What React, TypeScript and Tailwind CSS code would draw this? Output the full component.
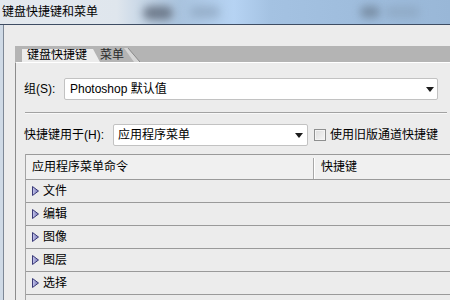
import React from "react";

function Tri() {
  return (
    <svg width="7" height="10" viewBox="0 0 7 10" className="shrink-0">
      <defs>
        <linearGradient id="tg" x1="0" y1="0" x2="1" y2="0">
          <stop offset="0" stopColor="#c8c8ee" />
          <stop offset="1" stopColor="#7070b0" />
        </linearGradient>
      </defs>
      <polygon points="0.5,0.5 6.5,5 0.5,9.5" fill="url(#tg)" stroke="#3a3a78" strokeWidth="1" />
    </svg>
  );
}

function Arrow() {
  return (
    <svg width="8" height="5" viewBox="0 0 8 5" className="shrink-0">
      <polygon points="0,0 8,0 4,5" fill="#1c1c1c" />
    </svg>
  );
}

export default function App() {
  const rows = ["文件", "编辑", "图像", "图层", "选择", ""];
  return (
    <div className="w-[450px] h-[300px] overflow-hidden bg-[#ececec] flex flex-col text-[12px] text-black font-['Liberation_Sans','Noto_Sans_CJK_SC',sans-serif]">
      <div className="relative h-[25px] shrink-0 border-b border-[#3e4d63] overflow-hidden bg-[linear-gradient(90deg,#e4e9ee_0%,#dfe6ed_26%,#c5d5e6_32%,#a9c3de_40%,#b6d3f3_52%,#a4c2e2_60%,#99b7d7_100%)]">
        <div className="absolute left-[143px] top-[6px] w-[30px] h-[14px] rounded-full bg-[#5d6878] blur-[4px] opacity-80" />
        <div className="absolute left-[190px] top-[6px] w-[30px] h-[12px] rounded-full bg-[#8ea6c0] blur-[4px] opacity-70" />
        <div className="absolute left-[360px] top-[6px] w-[20px] h-[12px] rounded-full bg-[#6b7d90] blur-[4px] opacity-70" />
        <div className="absolute left-[385px] top-[6px] w-[35px] h-[12px] rounded-full bg-[#8aa3bd] blur-[4px] opacity-60" />
        <span className="relative pl-[2px] leading-[24px] block">键盘快捷键和菜单</span>
      </div>
      <div className="flex flex-1 min-h-0">
        <div className="w-[4px] shrink-0 border-r border-[#7d8896] bg-[#cfdae6]" />
        <div className="flex-1 flex flex-col pt-[21px] min-w-0">
          <div className="ml-[11px] h-[16px] shrink-0 bg-[#b4b4b4] flex items-end pl-[7px]">
            <div className="relative z-10 h-[13px] w-[78px] bg-[#ececec] [clip-path:polygon(0_0,calc(100%-7px)_0,100%_100%,0_100%)] flex items-center pl-[5px] leading-[13px]">
              键盘快捷键
            </div>
            <div className="relative -ml-[4px] h-[14px] w-[44px] flex items-center pl-[4px] leading-[13px] text-[#2a2a2a]">
              菜单
              <svg width="18" height="14" viewBox="0 0 18 14" className="absolute right-0 top-0">
                <polygon points="2,0 6,0 18,14 12,14" fill="#d6d6d6" />
                <line x1="6" y1="0" x2="18" y2="14" stroke="#8a8a8a" strokeWidth="1" />
              </svg>
            </div>
          </div>
          <div className="ml-[11px] flex-1 border-l border-[#8c8c8c] border-t border-t-white pl-[8px] flex flex-col">
            <div className="mt-[15px] flex items-center h-[22px]">
              <div className="w-[40px] shrink-0">组(S):</div>
              <div className="w-[374px] h-[22px] shrink-0 bg-white border border-[#c2c2c2] rounded-[2px] flex items-center pl-[5px] pr-[3px]">
                <span className="flex-1">Photoshop 默认值</span>
                <Arrow />
              </div>
            </div>
            <div className="mt-[12px] ml-[1px] mr-[3px] h-[2px] border-t border-[#a2a2a2] border-b border-b-[#f8f8f8]" />
            <div className="mt-[10px] flex items-center h-[22px]">
              <div className="w-[89px] shrink-0">快捷键用于(H):</div>
              <div className="w-[195px] h-[22px] shrink-0 bg-white border border-[#c2c2c2] rounded-[2px] flex items-center pl-[4px] pr-[4px]">
                <span className="flex-1">应用程序菜单</span>
                <Arrow />
              </div>
              <div className="ml-[6px] w-[12px] h-[12px] shrink-0 border border-[#8e8f8f] bg-[linear-gradient(135deg,#dcdcdc,#f6f6f6)] shadow-[inset_0_0_0_1px_#f4f4f4]" />
              <div className="ml-[4px] whitespace-nowrap">使用旧版通道快捷键</div>
            </div>
            <div className="mt-[8px] ml-[1px] border-l border-[#a4a4a4] flex flex-col">
              <div className="h-[26px] border-t border-b border-[#9a9a9a] bg-[#f0f0f0] flex items-stretch">
                <div className="w-[287px] shrink-0 flex items-center pl-[6px]">应用程序菜单命令</div>
                <div className="flex items-end">
                  <div className="h-[21px] border-l border-[#a8a8a8] border-r border-r-white" />
                </div>
                <div className="flex items-center pl-[6px]">快捷键</div>
              </div>
              {rows.map((r, i) => (
                <div key={i} className="h-[23px] shrink-0 border-b border-[#9a9a9a] flex items-center pl-[6px]">
                  {r && (
                    <>
                      <Tri />
                      <span className="ml-[4px]">{r}</span>
                    </>
                  )}
                </div>
              ))}
            </div>
          </div>
        </div>
      </div>
    </div>
  );
}
